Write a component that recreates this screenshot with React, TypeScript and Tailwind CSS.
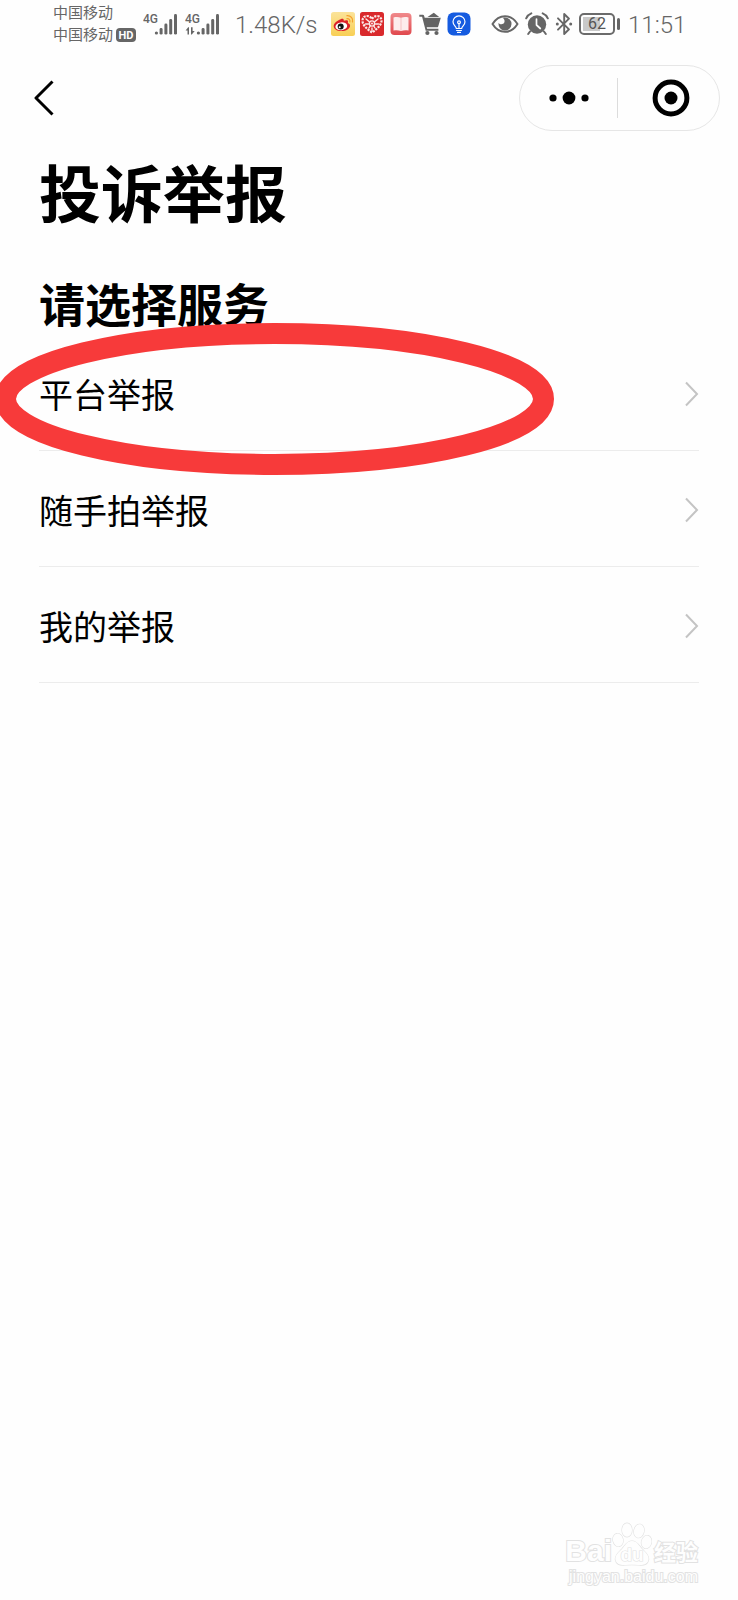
type ChevronProps = { className?: string };

const services = ['平台举报', '随手拍举报', '我的举报'];

function SignalBars({ data }: { data?: boolean }) {
  return (
    <svg className="h-6 w-9 shrink-0" viewBox="0 0 36 24" fill="#666" aria-hidden="true">
      <text x="0" y="11" fontSize="12" fontWeight="500" fontFamily="Roboto, sans-serif">4G</text>
      {data && (
        <path d="M3.2 15.2 0.6 18.4h1.900v4h1.500v-7.200zM6 15.200v7.200h.8l2.900-3.400H7.600v-3.800z" />
      )}
      <circle cx="13.4" cy="21" r="1.6" />
      <rect x="16.6" y="16" width="3" height="6.6" rx="1.4" />
      <rect x="21.4" y="11.6" width="3" height="11" rx="1.4" />
      <rect x="26.2" y="7" width="3" height="15.6" rx="1.4" />
      <rect x="31" y="2" width="3" height="20.6" rx="1.4" />
    </svg>
  );
}

function WeiboIcon() {
  return (
    <svg className="size-6" viewBox="0 0 24 24" aria-hidden="true">
      <defs>
        <linearGradient id="weibo" x1="0" y1="0" x2="0" y2="1">
          <stop offset="0" stopColor="#fbe39a" />
          <stop offset="1" stopColor="#f8cf55" />
        </linearGradient>
      </defs>
      <rect width="24" height="24" rx="2.5" fill="url(#weibo)" />
      <path d="M9.7 7.3c1.6-.9 3.3-.6 3.1 1.5 1.9-.8 4.3-1 4.3.9 0 .5-.2.9-.3 1.3 1.4.5 2.3 1.4 2.3 2.8 0 3-4 5.3-8.600 5.3-4.300 0-7.800-2-7.800-5.200 0-2.500 3.600-5.500 7-6.600z" fill="#dc2027" />
      <ellipse cx="10.3" cy="14.3" rx="5.9" ry="3.9" fill="#fff" transform="rotate(-6 10.3 14.3)" />
      <circle cx="9.7" cy="14.4" r="3" fill="#111" />
      <circle cx="8.7" cy="15.3" r="1" fill="#fff" />
      <path d="M16 6.600c1.900-.2 3.200 1.400 2.800 3.200M16 3.600c3.700-.3 6.400 2.800 5.500 6.300" fill="none" stroke="#f5a02c" strokeWidth="1.3" strokeLinecap="round" />
    </svg>
  );
}

function HeartIcon() {
  return (
    <svg className="size-6" viewBox="0 0 24 24" aria-hidden="true">
      <rect width="24" height="24" rx="2.5" fill="#d9292c" />
      <path d="M12 20.500C6.500 16.500 2.500 13 2.500 8.700 2.500 5.800 4.600 4 7 4c2 0 3.800 1 5 3 1.200-2 3-3 5-3 2.400 0 4.500 1.800 4.500 4.700 0 4.300-4 7.800-9.500 11.800z" fill="none" stroke="#fbe9e8" strokeWidth="2.2" strokeDasharray="2.2 1" />
      <g fill="none" stroke="#fbe9e8" strokeWidth="1.4">
        <circle cx="12" cy="11.500" r="2.600" />
        <path d="m6 7 3 2.500M18 7l-3 2.500M5.500 12h3M15.500 12h3M9 16l1.500-2.500M15 16l-1.500-2.500M12 16v2.500" strokeLinecap="round" />
      </g>
      <circle cx="12" cy="11.500" r="1" fill="#fbe9e8" />
    </svg>
  );
}

function BookIcon() {
  return (
    <svg className="size-6" viewBox="0 0 24 24" aria-hidden="true">
      <defs>
        <linearGradient id="book" x1="0" y1="0" x2="0" y2="1">
          <stop offset="0" stopColor="#f08a8c" />
          <stop offset="1" stopColor="#e0484d" />
        </linearGradient>
      </defs>
      <rect x="1.5" y="1" width="21" height="22" rx="4" fill="url(#book)" />
      <path d="M4.500 5.500c2.500-.6 5-.6 7.500.2 2.500-.8 5-.8 7.500-.2v13c-2.500-.4-5-.4-7.500.4-2.500-.8-5-.8-7.500-.4z" fill="#fdecec" />
      <path d="M12 6v12.600" stroke="#f3b9ba" strokeWidth="0.8" />
    </svg>
  );
}

function CartIcon() {
  return (
    <svg className="size-6" viewBox="0 0 24 24" fill="#636363" aria-hidden="true">
      <path d="M1.300 2.800h3.600c.6 0 1 .4 1.200.9l.6 2h16.100l-2.600 8.700c-.2.6-.6.9-1.200.9H8.700l.4 1.500h11.300v2H7.700L4.100 4.800H1.300z" />
      <path d="M9.500 5 15.800.8l5.400 4.200z" />
      <circle cx="9.4" cy="21" r="2.1" />
      <circle cx="18.5" cy="21" r="2.1" />
    </svg>
  );
}

function BulbIcon() {
  return (
    <svg className="size-6" viewBox="0 0 24 24" aria-hidden="true">
      <rect x="0.5" y="0.5" width="23" height="23" rx="6" fill="#155be0" />
      <g fill="none" stroke="#fff" strokeWidth="1.200" strokeLinecap="round" strokeLinejoin="round">
        <path d="M9.300 16.500c0-2-3.300-3-3.300-6.700a6 6 0 0 1 12 0c0 3.700-3.300 4.700-3.300 6.700z" />
        <path d="M9.600 18.500h4.800M10.500 20.400h3M12 16.300v-4.500" />
        <circle cx="12" cy="10.300" r="1.400" />
      </g>
    </svg>
  );
}

function EyeIcon() {
  return (
    <svg className="h-6 w-7" viewBox="0 0 28 24" aria-hidden="true">
      <path d="M1.500 12C4.600 7 9 4.200 14 4.200S23.400 7 26.500 12C23.400 17 19 19.800 14 19.800S4.600 17 1.500 12z" fill="none" stroke="#666" strokeWidth="2" strokeLinejoin="round" />
      <path d="M14 5.500a6.500 6.500 0 1 1-6.400 5.400c1.300 1.800 4.900 1.600 5.700-.4.600-1.600.1-3.600-1.300-4.600.6-.3 1.300-.4 2-.4z" fill="#666" />
    </svg>
  );
}

function AlarmIcon() {
  return (
    <svg className="size-6" viewBox="0 0 24 24" aria-hidden="true">
      <circle cx="12" cy="12.500" r="9.200" fill="#666" />
      <path d="M1.200 6.300C2.200 4 4 2.300 6.300 1.400M22.800 6.300c-1-2.300-2.800-4-5.100-4.900M5 19.500 3.200 22M19 19.500l1.800 2.500" fill="none" stroke="#666" strokeWidth="2" strokeLinecap="round" />
      <path d="M11.500 7v6l3.800 3.500" fill="none" stroke="#fff" strokeWidth="1.700" strokeLinecap="round" strokeLinejoin="round" />
    </svg>
  );
}

function BluetoothIcon() {
  return (
    <svg className="h-6 w-[18px]" viewBox="0 0 18 24" aria-hidden="true">
      <path d="m3 6.300 11 11L9.200 22V2L14 6.700l-11 11" fill="none" stroke="#666" strokeWidth="1.900" strokeLinejoin="round" strokeLinecap="round" />
      <circle cx="2.300" cy="12" r="1.500" fill="#666" />
      <circle cx="15.700" cy="12" r="1.500" fill="#666" />
    </svg>
  );
}

function Battery({ level }: { level: number }) {
  return (
    <div className="flex items-center gap-0.5">
      <div className="relative flex h-[22px] w-9 items-center justify-center rounded-[5px] border-2 border-[#6b6b6b] p-0.5">
        <div className="absolute inset-0.5">
          <div className="h-full bg-[#c9c9c9]" style={{ width: `${level}%` }} />
        </div>
        <span className="relative text-base leading-none text-[#555]">{level}</span>
      </div>
      <div className="h-3 w-[3px] rounded-sm bg-[#666]" />
    </div>
  );
}

function StatusBar() {
  return (
    <div className="flex h-12 items-center pl-[53px] font-['Roboto','Noto_Sans_CJK_SC',sans-serif] text-[#666]">
      <div className="w-[90px] text-[15px] leading-[22px] whitespace-nowrap">
        <p>中国移动</p>
        <p className="flex items-center gap-[3px]">
          中国移动
          <span className="flex h-[14px] w-5 items-center justify-center rounded bg-[#666] text-[11px] leading-none font-bold text-white">HD</span>
        </p>
      </div>
      <div className="flex gap-1.5">
        <SignalBars />
        <SignalBars data />
      </div>
      <span className="ml-[14px] w-24 pt-0.5 text-2xl font-light whitespace-nowrap">1.48K/s</span>
      <div className="flex items-center gap-[5px]">
        <WeiboIcon />
        <HeartIcon />
        <BookIcon />
        <CartIcon />
        <BulbIcon />
      </div>
      <div className="ml-5 flex items-center gap-[6px]">
        <EyeIcon />
        <AlarmIcon />
        <BluetoothIcon />
        <Battery level={62} />
        <span className="ml-0.5 pt-0.5 text-2xl font-light">11:51</span>
      </div>
    </div>
  );
}

function NavBar() {
  return (
    <nav className="mt-[17px] flex h-[66px] items-center justify-between pr-[18px] pl-[34px]">
      <button type="button" aria-label="返回">
        <svg className="h-9 w-5" viewBox="0 0 20 36" fill="none" stroke="#000" strokeWidth="3" strokeLinejoin="round">
          <path d="M18.500 1.500 2 18l16.500 16.500" />
        </svg>
      </button>
      <div className="flex h-full w-[201px] items-center rounded-full border border-[#e6e6e6]">
        <button type="button" aria-label="更多" className="flex h-full flex-1 items-center justify-center">
          <svg className="h-4 w-10" viewBox="0 0 40 16">
            <circle cx="4" cy="8" r="3.600" />
            <circle cx="20" cy="8" r="6.400" />
            <circle cx="36" cy="8" r="3.600" />
          </svg>
        </button>
        <div className="h-10 w-px bg-[#dcdcdc]" />
        <button type="button" aria-label="关闭" className="flex h-full flex-1 items-center justify-center pl-1">
          <svg className="size-[38px]" viewBox="0 0 38 38">
            <circle cx="19" cy="19" r="15.900" fill="none" stroke="#000" strokeWidth="5" />
            <circle cx="19" cy="19" r="6.500" />
          </svg>
        </button>
      </div>
    </nav>
  );
}

function Chevron({ className }: ChevronProps) {
  return (
    <svg className={className} viewBox="0 0 14 26" fill="none" stroke="#c4c4c4" strokeWidth="2" aria-hidden="true">
      <path d="m1 1.500 11 11.500-11 11.500" />
    </svg>
  );
}

function Highlight() {
  return (
    <svg className="pointer-events-none absolute -top-3 -left-11 h-[152px] w-[559px]" viewBox="0 0 559 152" aria-hidden="true">
      <ellipse cx="279.500" cy="76" rx="269" ry="65.500" fill="none" stroke="#f73a3a" strokeWidth="21" />
    </svg>
  );
}

function Watermark() {
  return (
    <footer className="mt-auto mr-10 mb-3 flex flex-col items-end self-end font-['Liberation_Sans','Noto_Sans_CJK_SC',sans-serif] text-[#fefefe] [paint-order:stroke] [-webkit-text-stroke:2px_#e2e2e2]">
      <div className="flex h-11 items-end">
        <span className="text-[30px] leading-[30px] font-bold">Bai</span>
        <svg className="h-11 w-10" viewBox="0 0 40 44" fill="#fefefe" stroke="#e2e2e2" strokeWidth="1.200">
          <ellipse cx="6" cy="18" rx="5" ry="6.500" transform="rotate(-12 6 18)" />
          <ellipse cx="15" cy="8" rx="5" ry="6.800" />
          <ellipse cx="27" cy="9" rx="5" ry="6.800" transform="rotate(12 27 9)" />
          <ellipse cx="34.500" cy="20" rx="5" ry="6.500" transform="rotate(14 34.500 20)" />
          <path d="M20 19c5 0 7 4.500 10 8 3.500 3.500 7.500 6.500 6.500 11-1 4.500-6 5.300-9.500 5-5-.5-9-.5-14 0-3.500.3-8.500-.5-9.500-5-1-4.500 3-7.500 6.500-11 3-3.500 5-8 10-8z" />
          <text x="20" y="39" textAnchor="middle" fontSize="19" fontWeight="700">du</text>
        </svg>
        <span className="ml-0.5 text-[22px] leading-[26px] font-bold">经验</span>
      </div>
      <span className="text-base leading-[22px]">jingyan.baidu.com</span>
    </footer>
  );
}

export default function App() {
  return (
    <div className="flex min-h-screen flex-col overflow-hidden bg-[#fefefe] font-['Noto_Sans_CJK_SC',sans-serif] text-black">
      <StatusBar />
      <NavBar />
      <main className="px-[39px] pt-[22px]">
        <h1 className="text-[62px] leading-[76px] font-bold">投诉举报</h1>
        <h2 className="mt-[42px] mb-0.5 text-[46px] leading-[62px] font-bold">请选择服务</h2>
        <ul>
          {services.map((name, i) => (
            <li key={name} className="relative border-b border-[#ececec]">
              <a href="#" className="flex h-[115px] items-center justify-between pt-0.5">
                <span className="text-[34px] leading-[50px]">{name}</span>
                <Chevron className="h-[26px] w-3.5" />
              </a>
              {i === 0 && <Highlight />}
            </li>
          ))}
        </ul>
      </main>
      <Watermark />
    </div>
  );
}
